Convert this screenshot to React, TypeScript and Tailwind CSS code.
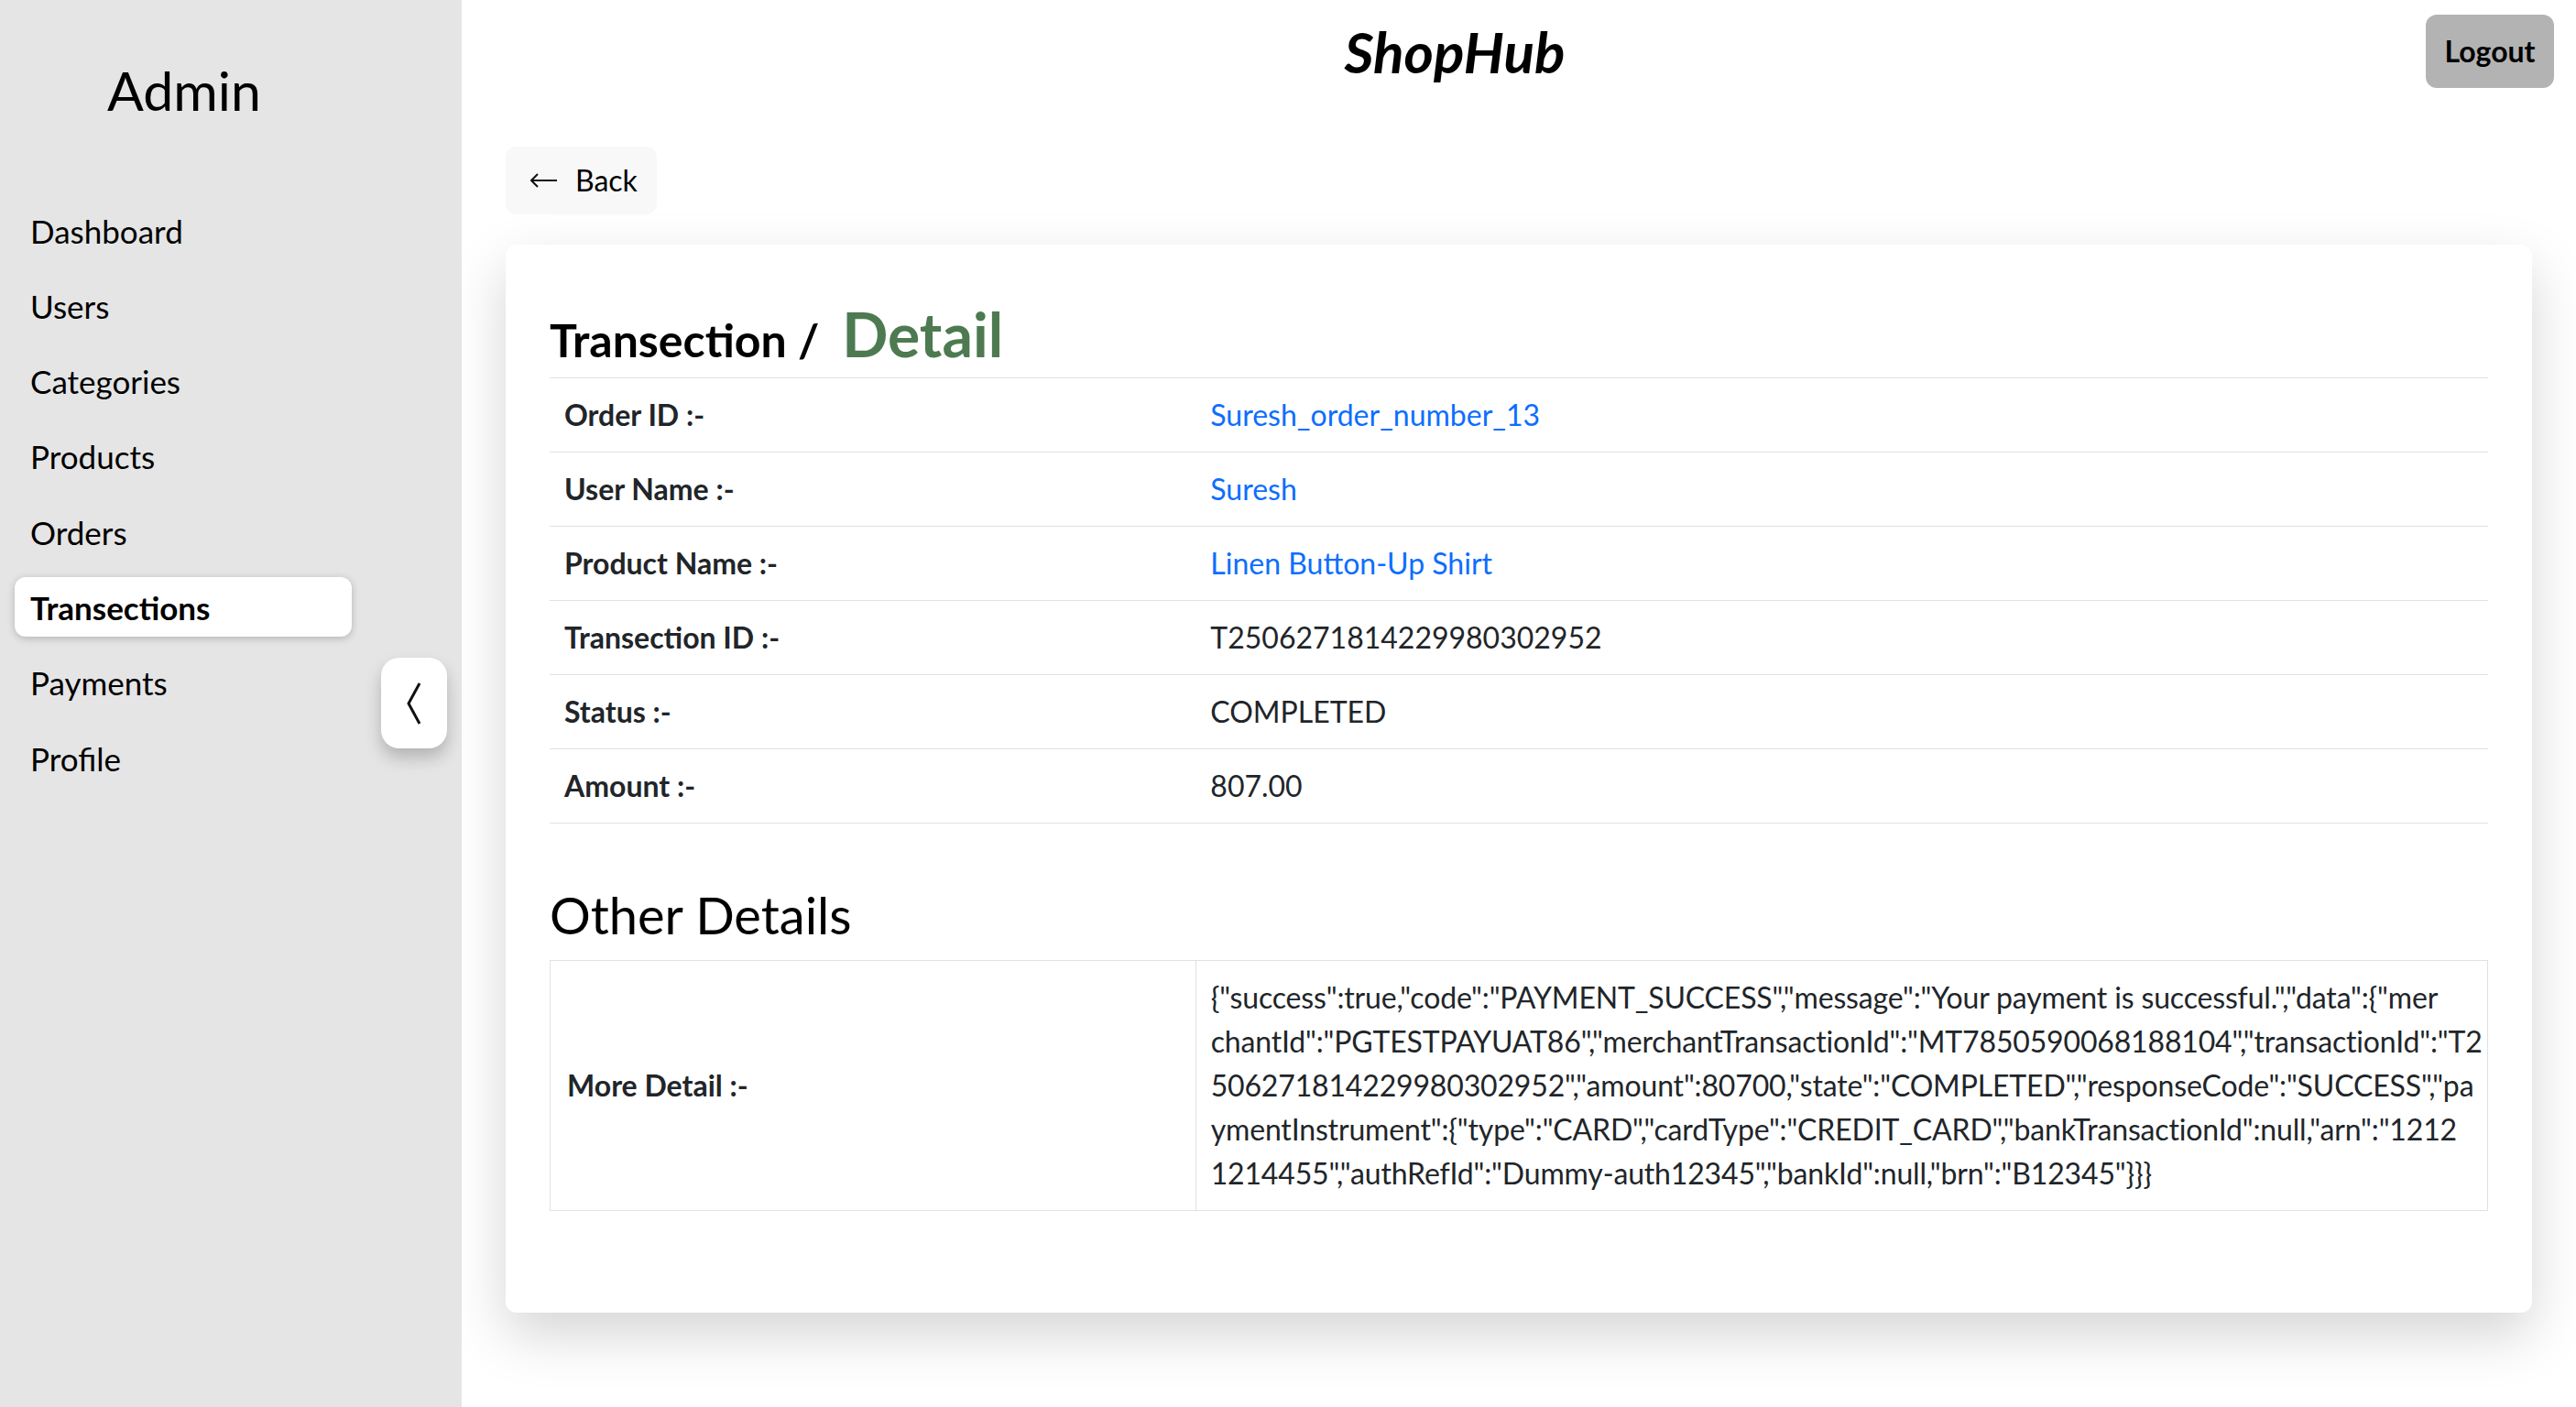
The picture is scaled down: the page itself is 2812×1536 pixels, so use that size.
import React from 'react';

const navItems = ['Dashboard', 'Users', 'Categories', 'Products', 'Orders', 'Transections', 'Payments', 'Profile'];

const rows = [
  { label: 'Order ID :-', value: 'Suresh_order_number_13', link: true },
  { label: 'User Name :-', value: 'Suresh', link: true },
  { label: 'Product Name :-', value: 'Linen Button-Up Shirt', link: true },
  { label: 'Transection ID :-', value: 'T2506271814229980302952', link: false },
  { label: 'Status :-', value: 'COMPLETED', link: false },
  { label: 'Amount :-', value: '807.00', link: false },
];

// the raw gateway response, kept on the same line breaks as the page
const responseLines = [
  '{"success":true,"code":"PAYMENT_SUCCESS","message":"Your payment is successful.","data":{"mer',
  'chantId":"PGTESTPAYUAT86","merchantTransactionId":"MT7850590068188104","transactionId":"T2',
  '506271814229980302952","amount":80700,"state":"COMPLETED","responseCode":"SUCCESS","pa',
  'ymentInstrument":{"type":"CARD","cardType":"CREDIT_CARD","bankTransactionId":null,"arn":"1212',
  '1214455","authRefId":"Dummy-auth12345","bankId":null,"brn":"B12345"}}}',
];

function Sidebar() {
  return (
    <aside className="relative w-[504px] shrink-0 bg-[#e5e5e5]">
      <h1 className="pl-[117px] pt-[69px] text-[59px] leading-none font-normal text-black">Admin</h1>
      <nav className="mt-[91px] flex flex-col gap-[17.3px] px-[16px]">
        {navItems.map(item => {
          const active = item === 'Transections';
          return (
            <div
              key={item}
              className={
                active
                  ? 'flex h-[65px] w-[368px] items-center rounded-[12px] bg-white px-[17px] text-[35px] leading-[48px] font-bold text-black shadow-[0_2px_8px_rgba(0,0,0,0.22)]'
                  : 'flex h-[65px] w-[368px] items-center px-[17px] text-[35px] leading-[48px] text-black'
              }
            >
              {item}
            </div>
          );
        })}
      </nav>

      <button className="absolute left-[416px] top-[718px] flex h-[99px] w-[72px] items-center justify-center rounded-[20px] bg-white shadow-[0_10px_18px_rgba(0,0,0,0.22)]">
        <svg width="18" height="48" viewBox="0 0 18 48" fill="none">
          <polyline points="15,2 3,24 15,46" stroke="#111" strokeWidth="3" strokeLinejoin="miter" />
        </svg>
      </button>
    </aside>
  );
}

export default function App() {
  return (
    <div className="flex h-[1536px] w-full bg-white font-['Segoe_UI','Lato',sans-serif] text-[#212529]">
      <Sidebar />

      <main className="flex flex-1 flex-col">
        <header className="flex items-center justify-between px-[24px] pt-[16px]">
          <div />
          <div className="text-[62px] leading-none font-bold italic text-black">ShopHub</div>
          <button className="h-[80px] w-[140px] rounded-[12px] bg-[#b3b3b3] text-[32px] font-bold text-black">
            Logout
          </button>
        </header>

        <div className="ml-[48px] mt-[64px]">
          <button className="flex h-[74px] w-[165px] items-center gap-[19px] rounded-[12px] bg-[#f8f8f8] pl-[27px] text-[32px] text-black">
            <svg width="30" height="16" viewBox="0 0 30 16" fill="none">
              <path d="M1 8H29M8 1L1 8L8 15" stroke="#111" strokeWidth="2" />
            </svg>
            Back
          </button>
        </div>

        <section className="mx-[48px] mt-[33px] rounded-[12px] bg-white px-[48px] pb-[111px] pt-[58px] shadow-[0_24px_60px_rgba(0,0,0,0.17)]">
          <h2 className="mb-[8px] flex items-baseline leading-[1.2] font-bold text-black">
            <span className="text-[50px]">Transection /</span>
            <span className="ml-[25px] text-[66px] text-[#4d7a51]">Detail</span>
          </h2>

          <div className="border-t-[1.5px] border-[#dee2e6]">
            {rows.map(r => (
              <div key={r.label} className="flex border-b-[1.5px] border-[#dee2e6] text-[32px] leading-[48px]">
                <div className="w-1/3 shrink-0 px-[16px] py-[16px] font-bold">{r.label}</div>
                <div className={r.link ? 'flex-1 px-[16px] py-[16px] text-[#0d6efd]' : 'flex-1 px-[16px] py-[16px]'}>
                  {r.value}
                </div>
              </div>
            ))}
          </div>

          <h3 className="mb-[16px] mt-[66px] text-[56px] leading-[1.2] font-normal text-black">Other Details</h3>

          <div className="flex border-[1.5px] border-[#dee2e6] text-[32px] leading-[48px]">
            <div className="flex w-1/3 shrink-0 items-center border-r-[1.5px] border-[#dee2e6] px-[18px] font-bold">More Detail :-</div>
            <div className="min-w-0 flex-1 px-[16px] py-[16px] tracking-[-0.16px]">
              {responseLines.map(line => (
                <div key={line} className="whitespace-nowrap">{line}</div>
              ))}
            </div>
          </div>
        </section>
      </main>
    </div>
  );
}
